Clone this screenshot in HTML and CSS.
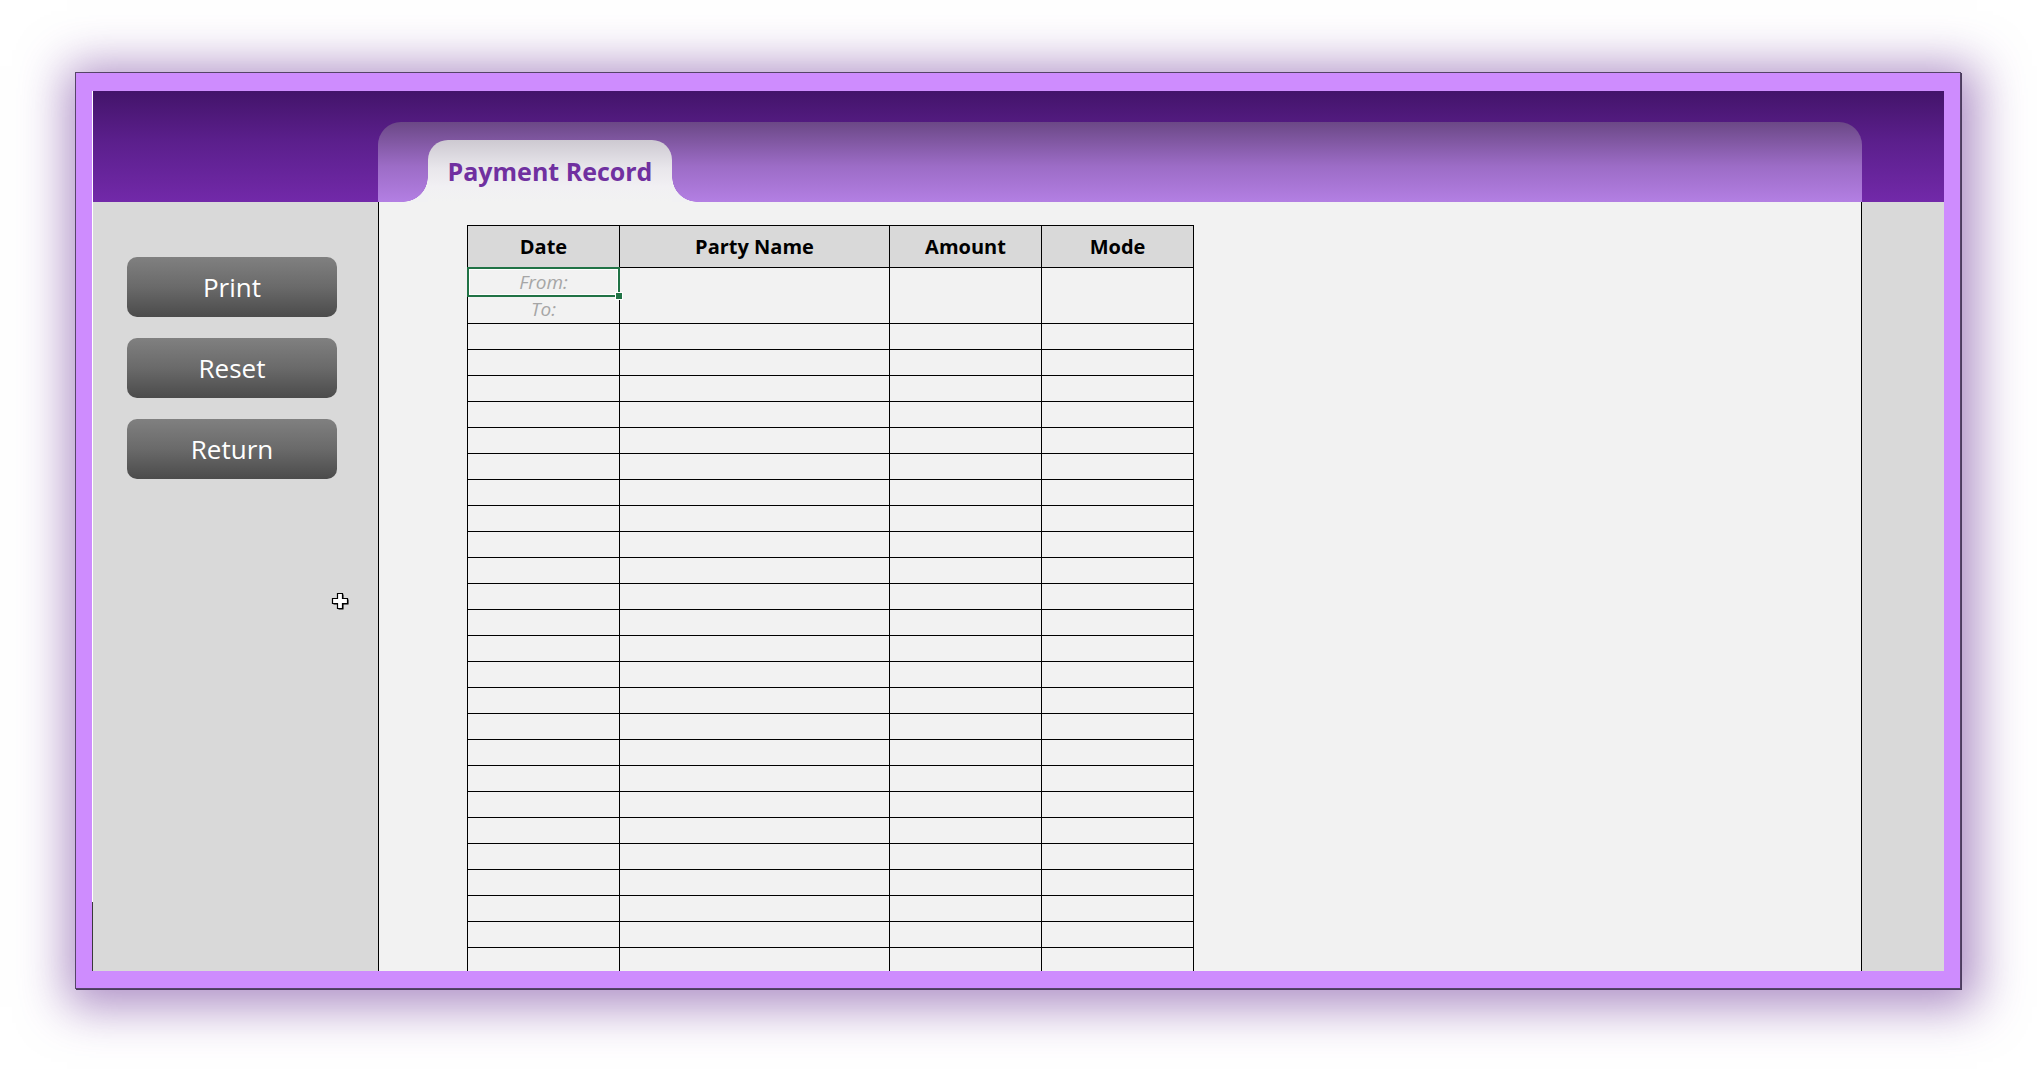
FILE: index.html
```html
<!DOCTYPE html>
<html lang="en">
<head>
<meta charset="utf-8">
<title>Payment Record</title>
<link rel="stylesheet" href="styles.css">
</head>
<body>
<div class="frame">
  <div class="inner">
    <div class="header">
      <div class="tabbar">
        <div class="tab">Payment Record</div>
      </div>
    </div>
    <div class="body">
      <div class="sidebar">
        <div class="btn">Print</div>
        <div class="btn">Reset</div>
        <div class="btn">Return</div>
        <svg class="cursor" width="18" height="18" viewBox="0 0 18 18">
          <path d="M6.5 1.5h5v5h5v5h-5v5h-5v-5h-5v-5h5z" fill="#000" transform="translate(1 1)"/>
          <path d="M6.5 1.5h5v5h5v5h-5v5h-5v-5h-5v-5h5z" fill="#fff" stroke="#000" stroke-width="1.2"/>
        </svg>
      </div>
      <div class="main">
        <table class="grid">
          <colgroup>
            <col class="c-date"><col class="c-party"><col class="c-amt"><col class="c-mode">
          </colgroup>
          <thead>
            <tr class="r-head"><th>Date</th><th>Party Name</th><th>Amount</th><th>Mode</th></tr>
          </thead>
          <tbody>
            <tr class="r-from"><td class="hint sel">From:<span class="handle"></span></td><td rowspan="2"></td><td rowspan="2"></td><td rowspan="2"></td></tr>
            <tr class="r-to"><td class="hint to">To:</td></tr>
            <tr class="r"><td></td><td></td><td></td><td></td></tr>
            <tr class="r"><td></td><td></td><td></td><td></td></tr>
            <tr class="r"><td></td><td></td><td></td><td></td></tr>
            <tr class="r"><td></td><td></td><td></td><td></td></tr>
            <tr class="r"><td></td><td></td><td></td><td></td></tr>
            <tr class="r"><td></td><td></td><td></td><td></td></tr>
            <tr class="r"><td></td><td></td><td></td><td></td></tr>
            <tr class="r"><td></td><td></td><td></td><td></td></tr>
            <tr class="r"><td></td><td></td><td></td><td></td></tr>
            <tr class="r"><td></td><td></td><td></td><td></td></tr>
            <tr class="r"><td></td><td></td><td></td><td></td></tr>
            <tr class="r"><td></td><td></td><td></td><td></td></tr>
            <tr class="r"><td></td><td></td><td></td><td></td></tr>
            <tr class="r"><td></td><td></td><td></td><td></td></tr>
            <tr class="r"><td></td><td></td><td></td><td></td></tr>
            <tr class="r"><td></td><td></td><td></td><td></td></tr>
            <tr class="r"><td></td><td></td><td></td><td></td></tr>
            <tr class="r"><td></td><td></td><td></td><td></td></tr>
            <tr class="r"><td></td><td></td><td></td><td></td></tr>
            <tr class="r"><td></td><td></td><td></td><td></td></tr>
            <tr class="r"><td></td><td></td><td></td><td></td></tr>
            <tr class="r"><td></td><td></td><td></td><td></td></tr>
            <tr class="r"><td></td><td></td><td></td><td></td></tr>
            <tr class="r"><td></td><td></td><td></td><td></td></tr>
            <tr class="r"><td></td><td></td><td></td><td></td></tr>
            <tr class="r"><td></td><td></td><td></td><td></td></tr>
          </tbody>
        </table>
      </div>
      <div class="strip"></div>
    </div>
  </div>
</div>
</body>
</html>
```
FILE: styles.css
```css
html, body {
  margin: 0;
  padding: 0;
  background: #ffffff;
}
body {
  width: 2037px;
  height: 1069px;
  overflow: hidden;
  font-family: "Open Sans", "Noto Sans", sans-serif;
}
.frame {
  margin: 72px 0 0 75px;
  width: 1886px;
  height: 917px;
  box-sizing: border-box;
  border: 1px solid #554468;
  background: #ce8cfe;
  padding: 18px 16px 17px 16px;
  box-shadow: 1px 1px 0 #4b3b5e, 4px 6px 45px 12px rgba(105, 50, 150, 0.55);
}
.inner {
  position: relative;
  width: 1852px;
  height: 880px;
  box-sizing: border-box;
  border-left: 1px solid #ffffff;
  display: flex;
  flex-direction: column;
}
.inner::after {
  content: "";
  position: absolute;
  left: -1px;
  bottom: 0;
  width: 1px;
  height: 69px;
  background: #3a3a3a;
}
.header {
  height: 111px;
  flex: none;
  box-sizing: border-box;
  padding: 31px 0 0 285px;
  background: linear-gradient(#43146a, #5b1f8c 45%, #7229a9);
  display: flex;
}
.tabbar {
  width: 1484px;
  height: 80px;
  box-sizing: border-box;
  padding: 18px 0 0 50px;
  border-radius: 23px 23px 0 0;
  background: linear-gradient(#6b4886, #9c6cc6 55%, #b37fe3);
}
.tab {
  position: relative;
  width: 244px;
  height: 62px;
  border-radius: 20px 20px 0 0;
  background: linear-gradient(#cdc9d1, #e8e6eb 45%, #f1f0f3 75%, #f2f2f2);
  display: flex;
  align-items: center;
  justify-content: center;
  color: #7030a0;
  font-weight: 700;
  font-size: 25px;
  box-sizing: border-box;
}
.tab::before,
.tab::after {
  content: "";
  position: absolute;
  bottom: 0;
  width: 25px;
  height: 25px;
}
.tab::before {
  left: -25px;
  background: radial-gradient(circle at 0 0, transparent 24.5px, #f1f1f3 25px);
}
.tab::after {
  right: -25px;
  background: radial-gradient(circle at 100% 0, transparent 24.5px, #f1f1f3 25px);
}
.body {
  flex: 1;
  display: flex;
  min-height: 0;
}
.sidebar {
  position: relative;
  width: 286px;
  flex: none;
  box-sizing: border-box;
  border-right: 1px solid #000;
  background: #d9d9d9;
  padding: 55px 0 0 34px;
  display: flex;
  flex-direction: column;
  gap: 21px;
}
.btn {
  width: 210px;
  height: 60px;
  border-radius: 10px;
  background: linear-gradient(#808080, #6a6a6a 50%, #4b4b4b);
  color: #ffffff;
  font-size: 26px;
  display: flex;
  align-items: center;
  justify-content: center;
  padding-bottom: 1px;
  box-sizing: border-box;
}
.cursor {
  position: absolute;
  left: 238px;
  top: 390px;
}
.main {
  width: 1482px;
  flex: none;
  background: #f2f2f2;
  box-sizing: border-box;
  padding: 23px 0 0 88px;
  overflow: hidden;
}
.strip {
  width: 83px;
  flex: none;
  box-sizing: border-box;
  border-left: 1px solid #000;
  background: #d9d9d9;
}
.grid {
  border-collapse: collapse;
  table-layout: fixed;
  width: 726px;
}
.c-date { width: 152px; }
.c-party { width: 270px; }
.c-amt { width: 152px; }
.c-mode { width: 152px; }
.grid th,
.grid td {
  border: 1px solid #000;
  padding: 0;
  text-align: center;
  vertical-align: middle;
}
.grid th {
  background: #d9d9d9;
  color: #000;
  font-weight: 700;
  font-size: 20px;
}
.r-head { height: 42px; }
.r-from { height: 28px; }
.r-to { height: 28px; }
.r { height: 26px; }
.grid td.hint {
  color: #a6a6a6;
  font-style: italic;
  font-size: 19px;
}
.grid td.sel {
  position: relative;
  border-bottom: none;
}
.grid td.to {
  border-top: none;
}
.grid td.sel::after {
  content: "";
  position: absolute;
  left: -1px;
  top: -1px;
  right: -1px;
  bottom: -1px;
  border: 2px solid #217346;
  box-shadow: inset 0 0 0 1px #ffffff;
}
.handle {
  position: absolute;
  right: -4px;
  bottom: -4px;
  width: 6px;
  height: 6px;
  background: #217346;
  border: 1px solid #ffffff;
  z-index: 1;
}
```
